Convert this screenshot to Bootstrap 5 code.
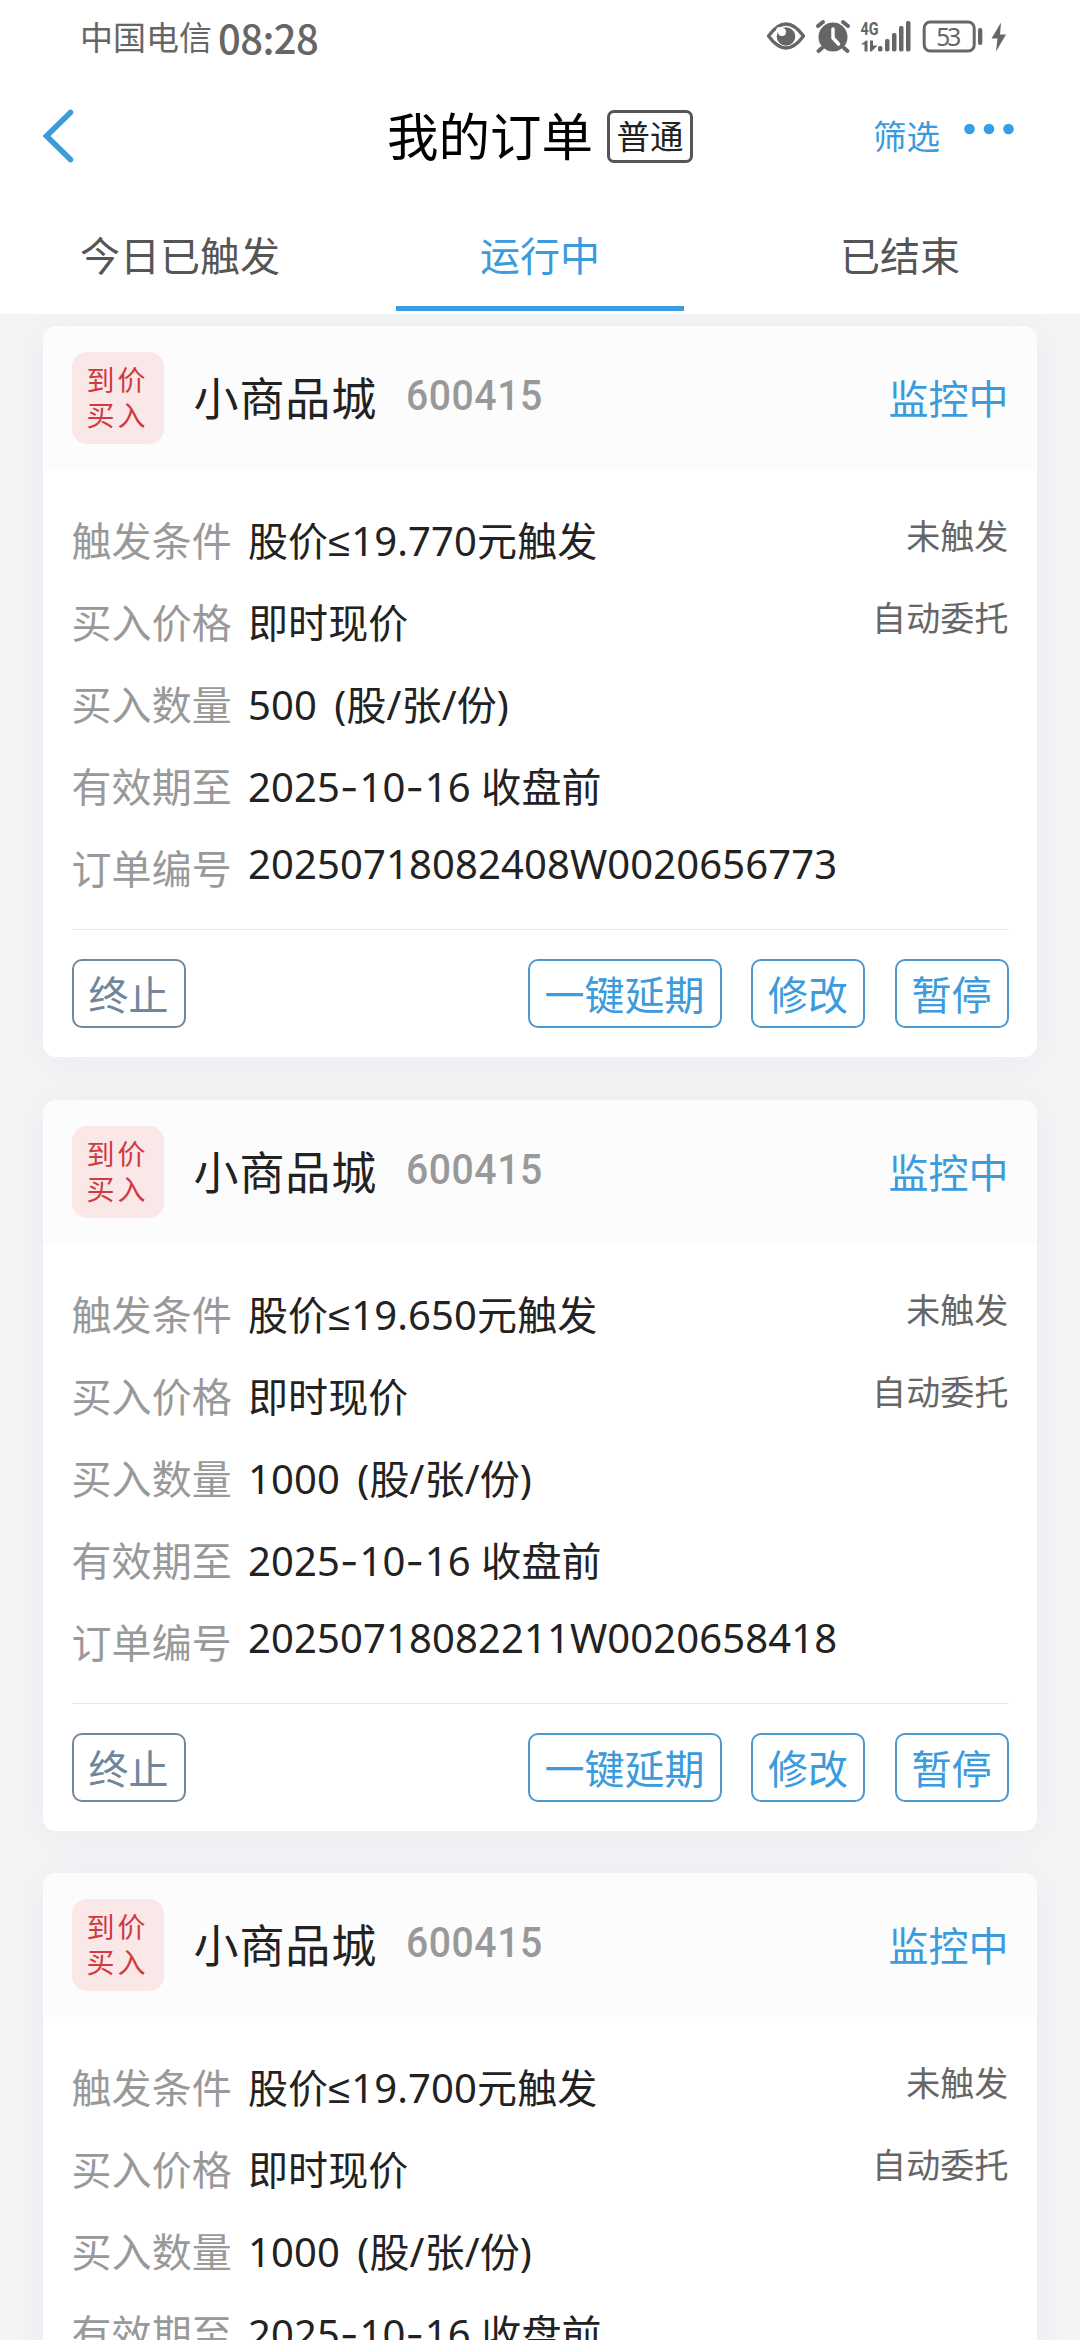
<!DOCTYPE html>
<html lang="zh-CN">
<head>
<meta charset="utf-8">
<meta name="viewport" content="width=device-width, initial-scale=1">
<title>我的订单</title>
<link href="https://cdn.jsdelivr.net/npm/bootstrap@5.3.0/dist/css/bootstrap.min.css" rel="stylesheet">
<style>
:root{--app-blue:#3b9bdc;}
html,body{height:2340px;overflow:hidden;}
body{background:#f3f4f6;color:#222;font-family:"Noto Sans","Noto Sans CJK SC",sans-serif;font-size:40px;line-height:1;}
.app-top{height:314px;z-index:2;}
.status-bar{height:75px;padding:0 70px 0 80px;color:#666;}
.carrier{font-size:33px;line-height:75px;}
.clock{font:500 40px/75px "Noto Sans CJK SC",sans-serif;margin-left:6px;letter-spacing:-.6px;}
.title-bar{height:122px;padding:0 66px 0 43px;}
.title-side{width:210px;}
.title-mid{padding-left:23px;}
.page-title{font-size:51.5px;line-height:60px;color:#000;}
.type-tag{margin-left:14px;width:86px;height:53px;border:3px solid #555;border-radius:7px;font-size:33.5px;line-height:47px;color:#222;text-align:center;}
.filter-link{font-size:33.5px;line-height:40px;color:var(--app-blue);text-decoration:none;}
.order-tabs{height:117px;}
.order-tabs .nav-link{height:117px;padding:0;border-radius:0;font-size:40px;line-height:118px;color:#555;}
.order-tabs .nav-link.active{color:var(--app-blue);}
.order-tabs .nav-link.active::after{content:"";display:block;width:288px;height:5px;margin:-9px auto 0;background:var(--app-blue);}
.order-list{height:2026px;overflow:hidden;padding:12px 43px 0;gap:42.5px;}
.order-card{border:0;border-radius:13px;box-shadow:0 4px 40px rgba(30,40,60,.045);flex-shrink:0;height:731px;color:#222;}
.order-head{height:144px;padding:0 28.5px;background:#fcfcfc;border-radius:13px 13px 0 0;}
.kind{width:92px;height:92px;padding-top:11px;padding-left:0;border-radius:15px;background:#fae7e7;color:#d03a40;font-size:28px;letter-spacing:3px;line-height:35px;text-align:center;}
.stock-name{margin-left:30px;font-size:45px;letter-spacing:.9px;line-height:60px;padding-top:2px;}
.stock-code{margin-left:29px;margin-bottom:6px;font:500 43px/50px Roboto,sans-serif;letter-spacing:.6px;color:#999;transform:scaleX(.91);transform-origin:0 50%;}
.state{color:var(--app-blue);padding-top:2px;}
.order-body{padding:30px 28.5px 0;}
.field{height:82px;line-height:82px;letter-spacing:.12px;}
.field-label{width:176.5px;color:#999;}
.field-note{font-size:34px;color:#666;margin-top:-5px;}
.hy,.le{font-family:Inter,sans-serif;}
.hy{letter-spacing:1px;}
.le{display:inline-block;width:23px;line-height:1;font-family:"Liberation Sans",sans-serif;}
.up{margin-top:-5px;}
.order-actions{margin-top:19px;border-top:1px solid #e8e8e8;padding-top:29px;gap:29.5px;}
.order-actions .btn{height:69px;padding:0 15px;border:2px solid #4a9ad0;border-radius:10px;font-size:40px;line-height:67px;color:var(--app-blue);}
.order-actions .btn-stop{border-color:#74889b;color:#70869c;}
</style>
</head>
<body>
<header class="app-top bg-white position-relative">
  <div class="status-bar d-flex align-items-center">
    <span class="carrier">中国电信</span><span class="clock">08:28</span>
    <svg class="ms-auto" width="250" height="75" viewBox="760 0 250 75" fill="#666">
      <path d="M768.5 36Q786 12 803.500 36Q786 60 768.500 36Z" fill="none" stroke="#666" stroke-width="3.300" stroke-linejoin="round"/>
      <circle cx="786" cy="36.500" r="9.300"/><circle cx="782" cy="32" r="4" fill="#fff"/><circle cx="779" cy="29.500" r="2.500" fill="#fff"/>
      <circle cx="833" cy="37" r="14.500"/>
      <path d="M822 48l-3.500 3M844 48l3.500 3M818 26l5-4M848 26l-5-4" stroke="#666" stroke-width="4" stroke-linecap="round"/>
      <path d="M833 29v9l5.500 6" fill="none" stroke="#fff" stroke-width="3.500" stroke-linecap="round"/>
      <text x="860.500" y="35" font-family="Roboto" font-weight="700" font-size="19" textLength="18" lengthAdjust="spacingAndGlyphs">4G</text>
      <path d="M861 44.500l5-4h1.500v11h-3v-7zM870 40.500h3v5h4.500l-6 6H870z"/>
      <rect x="878" y="46" width="4.500" height="5.500" rx="1.800"/><rect x="885" y="39" width="4.500" height="12.500" rx="1.800"/><rect x="892" y="33" width="4.500" height="18.500" rx="1.800"/><rect x="899" y="26" width="4.500" height="25.500" rx="1.800"/><rect x="906" y="21" width="4.500" height="30.500" rx="1.800"/>
      <rect x="924.200" y="22" width="50" height="29" rx="6" fill="none" stroke="#666" stroke-width="3"/>
      <text x="948.700" y="45.500" text-anchor="middle" font-family="Noto Sans" font-size="24.500" textLength="25">53</text>
      <rect x="978" y="28" width="4.300" height="17" rx="2"/>
      <path d="M1001 22.500L991.500 38.500H997.500L996 51.500L1006 34.500H1000Z"/>
    </svg>
  </div>
  <div class="title-bar d-flex align-items-center justify-content-between">
    <a class="title-side" href="#" aria-label="返回"><svg class="d-block" width="31" height="54" viewBox="0 0 31 54" fill="none" stroke="#3b9bdc" stroke-width="5.500" stroke-linecap="round"><path d="M27.500 3.500L3.500 27L27.500 50.500"/></svg></a>
    <div class="title-mid d-flex align-items-center"><h1 class="page-title fw-normal m-0">我的订单</h1><span class="type-tag">普通</span></div>
    <div class="title-side d-flex align-items-center justify-content-end">
      <a class="filter-link" href="#">筛选</a>
      <svg width="50" height="30" viewBox="0 0 50 30" class="ms-4" fill="#359ee6"><circle cx="5.500" cy="8" r="5.300"/><circle cx="25" cy="8" r="5.300"/><circle cx="44.500" cy="8" r="5.300"/></svg>
    </div>
  </div>
  <ul class="order-tabs nav nav-fill flex-nowrap">
    <li class="nav-item col-4"><a class="nav-link" href="#">今日已触发</a></li>
    <li class="nav-item col-4"><a class="nav-link active" href="#">运行中</a></li>
    <li class="nav-item col-4"><a class="nav-link" href="#">已结束</a></li>
  </ul>
</header>
<main class="order-list d-flex flex-column">
  <article class="order-card card">
    <div class="order-head d-flex align-items-center"><div class="kind">到价<br>买入</div><span class="stock-name">小商品城</span><span class="stock-code">600415</span><span class="state ms-auto">监控中</span></div>
    <div class="order-body">
      <div class="field d-flex"><span class="field-label">触发条件</span><span>股价<span class="le">≤</span>19.770元触发</span><span class="field-note ms-auto">未触发</span></div>
      <div class="field d-flex"><span class="field-label">买入价格</span><span>即时现价</span><span class="field-note ms-auto">自动委托</span></div>
      <div class="field d-flex"><span class="field-label">买入数量</span><span>500&thinsp; (股/张/份)</span></div>
      <div class="field d-flex"><span class="field-label">有效期至</span><span>2025<span class="hy">-</span>10<span class="hy">-</span>16 收盘前</span></div>
      <div class="field d-flex"><span class="field-label">订单编号</span><span class="up">20250718082408W0020656773</span></div>
      <div class="order-actions d-flex"><button class="btn btn-stop me-auto">终止</button><button class="btn">一键延期</button><button class="btn">修改</button><button class="btn">暂停</button></div>
    </div>
  </article>
  <article class="order-card card">
    <div class="order-head d-flex align-items-center"><div class="kind">到价<br>买入</div><span class="stock-name">小商品城</span><span class="stock-code">600415</span><span class="state ms-auto">监控中</span></div>
    <div class="order-body">
      <div class="field d-flex"><span class="field-label">触发条件</span><span>股价<span class="le">≤</span>19.650元触发</span><span class="field-note ms-auto">未触发</span></div>
      <div class="field d-flex"><span class="field-label">买入价格</span><span>即时现价</span><span class="field-note ms-auto">自动委托</span></div>
      <div class="field d-flex"><span class="field-label">买入数量</span><span>1000&thinsp; (股/张/份)</span></div>
      <div class="field d-flex"><span class="field-label">有效期至</span><span>2025<span class="hy">-</span>10<span class="hy">-</span>16 收盘前</span></div>
      <div class="field d-flex"><span class="field-label">订单编号</span><span class="up">20250718082211W0020658418</span></div>
      <div class="order-actions d-flex"><button class="btn btn-stop me-auto">终止</button><button class="btn">一键延期</button><button class="btn">修改</button><button class="btn">暂停</button></div>
    </div>
  </article>
  <article class="order-card card">
    <div class="order-head d-flex align-items-center"><div class="kind">到价<br>买入</div><span class="stock-name">小商品城</span><span class="stock-code">600415</span><span class="state ms-auto">监控中</span></div>
    <div class="order-body">
      <div class="field d-flex"><span class="field-label">触发条件</span><span>股价<span class="le">≤</span>19.700元触发</span><span class="field-note ms-auto">未触发</span></div>
      <div class="field d-flex"><span class="field-label">买入价格</span><span>即时现价</span><span class="field-note ms-auto">自动委托</span></div>
      <div class="field d-flex"><span class="field-label">买入数量</span><span>1000&thinsp; (股/张/份)</span></div>
      <div class="field d-flex"><span class="field-label">有效期至</span><span>2025<span class="hy">-</span>10<span class="hy">-</span>16 收盘前</span></div>
    </div>
  </article>
</main>
<script src="https://cdn.jsdelivr.net/npm/bootstrap@5.3.0/dist/js/bootstrap.bundle.min.js"></script>
</body>
</html>
